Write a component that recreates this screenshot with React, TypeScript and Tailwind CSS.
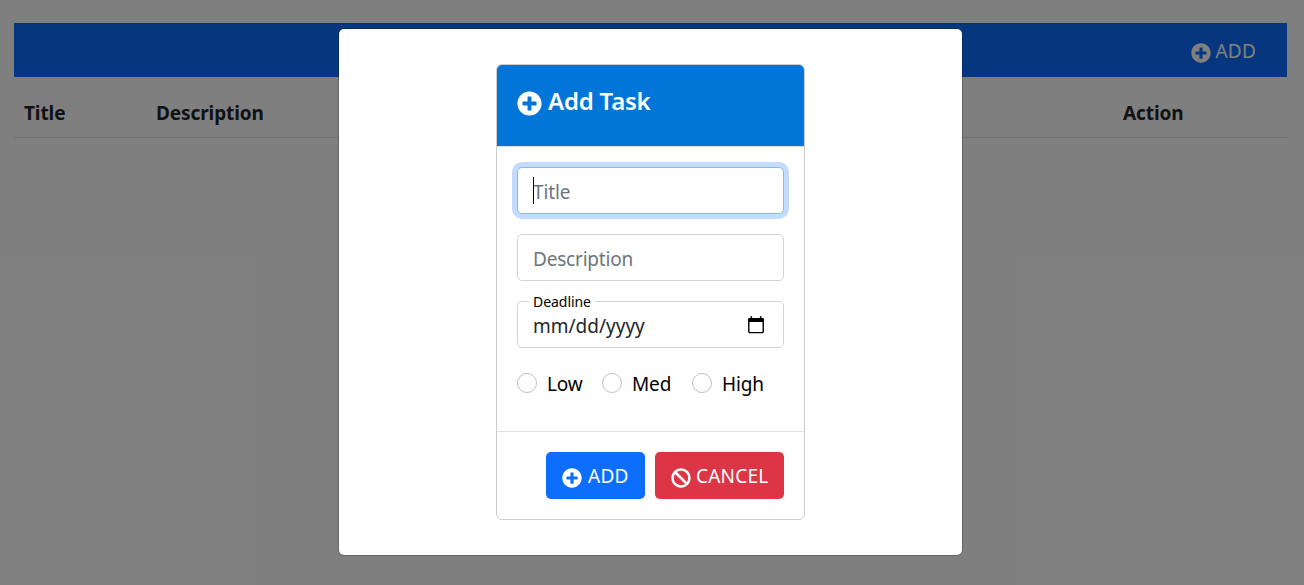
import { FaBan, FaPlusCircle } from "react-icons/fa";

const inputClass =
  "block h-[47px] w-full rounded-[5px] border bg-white px-[15px] pt-[2px] text-[19px] text-[#212529] placeholder-[#6c757d] caret-transparent outline-none";

function CalendarIcon() {
  return (
    <svg width="16" height="18" viewBox="0 0 16 18" fill="none">
      <path d="M0.5 2h15v4h-15z" fill="#000" />
      <path d="M2.5 0.3h1.6v3H2.5zM11.9 0.3h1.6v3h-1.6z" fill="#000" />
      <rect x="0.8" y="2.6" width="14.4" height="14" rx="0.8" stroke="#000" strokeWidth="1.4" />
    </svg>
  );
}

function Priority({ label, width }: { label: string; width: string }) {
  return (
    <label className={`flex items-center ${width}`}>
      <input
        type="radio"
        name="priority"
        className="size-5 shrink-0 appearance-none rounded-full border border-[#bfbfbf] bg-white"
      />
      <span className="ml-[10px] pt-[2px] text-[19px] leading-[30px] tracking-[-0.15px] text-black">{label}</span>
    </label>
  );
}

export default function App() {
  return (
    <div className="relative h-[585px] overflow-hidden bg-white font-['Noto_Sans','Open_Sans',sans-serif]">
      <div className="pl-[14px] pr-[17px] pt-[23px]">
        <nav className="flex h-[54px] items-center justify-end bg-[#0d6efd] pr-[31px] pt-[2px] text-white">
          <button className="flex items-center gap-[5px] text-[19px] leading-[30px]">
            <FaPlusCircle className="mt-[3px] size-5" />
            <span className="mb-px tracking-[0.2px]">ADD</span>
          </button>
        </nav>
        <div className="flex h-[61px] items-center border-b border-[#dee2e6] pt-[13px] text-[19px] font-bold text-[#212529]">
          <div className="w-[132px] pl-[10px] tracking-[-0.1px]">Title</div>
          <div className="w-[967px] pl-[10px] tracking-[-0.1px]">Description</div>
          <div className="pl-[10px] tracking-[-0.1px]">Action</div>
        </div>
      </div>

      <div className="absolute inset-0 flex items-start justify-center bg-black/50 pr-[3px] pt-[29px]">
        <div className="flex h-[526px] w-[623px] justify-center rounded-[5px] bg-white pt-[35px] shadow-[0_0_0_1px_rgba(0,0,0,0.2)]">
          <div className="flex h-[456px] w-[309px] flex-col overflow-hidden rounded-[6px] border border-[#cccccc]">
            <header className="flex h-[82px] items-start border-b border-[#d8dfe6] bg-[#0275d8] pl-5 pt-[20px] text-white">
              <FaPlusCircle className="mt-[6px] size-[25px]" />
              <h5 className="ml-[6px] text-[24px] font-semibold leading-[32px] tracking-[-0.2px]">Add Task</h5>
            </header>

            <div className="flex h-[285px] flex-col gap-5 border-b border-[#dee2e6] px-5 pt-5">
              <div className="relative">
                <input
                  placeholder="Title"
                  className={`${inputClass} border-[#86b7fe] tracking-[-0.15px] shadow-[0_0_0_5px_#c2dbfe]`}
                />
                <span className="absolute left-[16px] top-[10px] h-[27px] w-px bg-black" />
              </div>
              <input placeholder="Description" className={`${inputClass} border-[#ced4da] tracking-[-0.2px]`} />
              <div className="relative flex h-[47px] items-center justify-between rounded-[5px] border border-[#ced4da] pl-[15px] pr-[19px]">
                <span className="absolute -top-[10px] left-[11px] bg-white px-1 text-[14px] leading-5 tracking-[-0.05px] text-black">
                  Deadline
                </span>
                <span className="mt-[3px] text-[19px] tracking-[0px] text-[#212529]">mm/dd/yyyy</span>
                <CalendarIcon />
              </div>
              <div className="flex h-[30px]">
                <Priority label="Low" width="w-[85px]" />
                <Priority label="Med" width="w-[90px]" />
                <Priority label="High" width="w-auto" />
              </div>
            </div>

            <footer className="flex justify-end gap-[10px] px-5 pt-5 text-[19px] leading-[30px] text-white">
              <button className="flex h-[47px] w-[99px] items-center rounded-[5px] bg-[#0d6efd] pl-4">
                <FaPlusCircle className="mt-[4px] size-5" />
                <span className="ml-[6px] tracking-[0.3px]">ADD</span>
              </button>
              <button className="flex h-[47px] w-[129px] items-center rounded-[5px] bg-[#dc3545] pl-4">
                <FaBan className="mt-[4px] size-5" />
                <span className="ml-[5px] tracking-[0.2px]">CANCEL</span>
              </button>
            </footer>
          </div>
        </div>
      </div>
    </div>
  );
}
